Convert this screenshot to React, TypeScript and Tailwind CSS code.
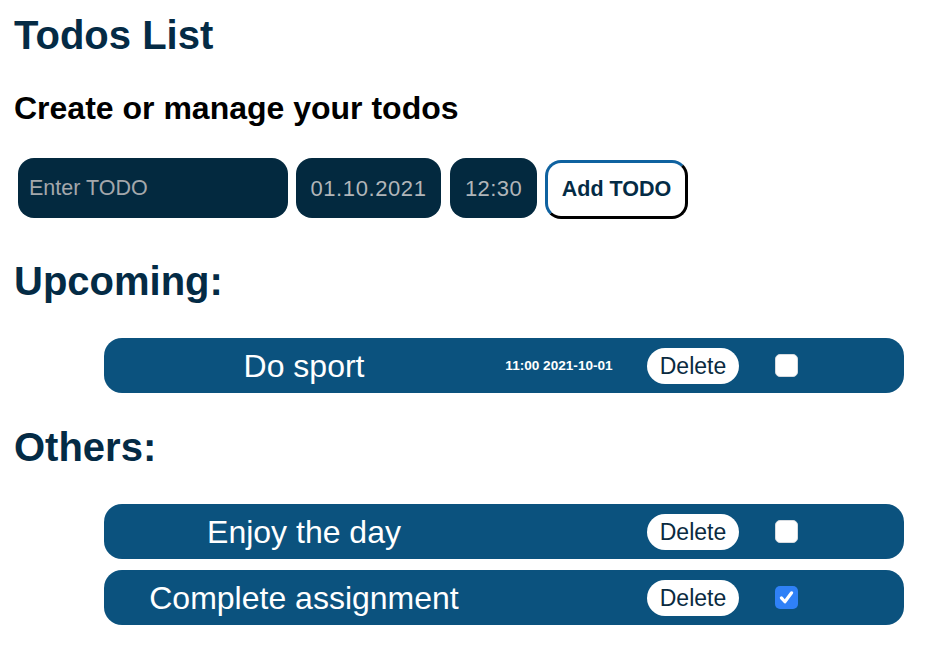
import React, { useState } from 'react';

type Todo = {
  id: number;
  title: string;
  time?: string;
  date?: string;
  done: boolean;
};

const initialUpcoming: Todo[] = [{ id: 1, title: 'Do sport', time: '11:00', date: '2021-10-01', done: false }];

const initialOthers: Todo[] = [
  { id: 2, title: 'Enjoy the day', done: false },
  { id: 3, title: 'Complete assignment', done: true },
];

const font = { fontFamily: '"Liberation Sans", Arial, Helvetica, sans-serif' };

const CheckBox: React.FC<{ checked: boolean; onChange: () => void }> = ({ checked, onChange }) => (
  <button
    type="button"
    onClick={onChange}
    className={
      checked
        ? 'w-[23px] h-[23px] rounded-[5px] bg-[#2f81f7] flex items-center justify-center'
        : 'w-[23px] h-[23px] rounded-[5px] bg-white border border-[#d6dbe0] flex items-center justify-center'
    }
  >
    {checked && (
      <svg width="17" height="17" viewBox="0 0 16 16" fill="none">
        <path d="M3.2 8.4 L6.5 12 L12.8 3.6" stroke="white" strokeWidth="3" strokeLinecap="round" strokeLinejoin="round" />
      </svg>
    )}
  </button>
);

const TodoRow: React.FC<{ todo: Todo; onToggle: () => void; onDelete: () => void }> = ({ todo, onToggle, onDelete }) => (
  <li className="flex items-center h-[55px] w-[800px] rounded-[18px] bg-[#0b527e] text-white">
    <span className="w-[400px] text-center text-[32px] leading-none">{todo.title}</span>
    <span className="w-[110px] text-center text-[13.6px] font-bold leading-none whitespace-nowrap">
      {todo.time ? `${todo.time} ${todo.date}` : ''}
    </span>
    <button
      type="button"
      onClick={onDelete}
      className="ml-[33px] w-[92px] h-[36px] pt-[2px] rounded-full bg-white text-[#0a2a40] text-[23px] leading-none"
    >
      Delete
    </button>
    <div className="ml-[36px] flex items-center">
      <CheckBox checked={todo.done} onChange={onToggle} />
    </div>
  </li>
);

export default function App() {
  const [upcoming, setUpcoming] = useState<Todo[]>(initialUpcoming);
  const [others, setOthers] = useState<Todo[]>(initialOthers);

  const toggle = (list: Todo[], set: (t: Todo[]) => void, id: number) =>
    set(list.map((t) => (t.id === id ? { ...t, done: !t.done } : t)));
  const remove = (list: Todo[], set: (t: Todo[]) => void, id: number) => set(list.filter((t) => t.id !== id));

  return (
    <div className="min-h-screen w-full bg-white" style={font}>
      <div className="pl-[14px]">
        <h1 className="pt-[15px] text-[40px] leading-none font-bold text-[#042b45]">Todos List</h1>
        <h3 className="mt-[37px] text-[32px] leading-none font-bold text-black">Create or manage your todos</h3>

        <div className="mt-[34px] h-[60px] flex items-start pl-[4px]">
          <input
            placeholder="Enter TODO"
            className="w-[270px] h-[60px] rounded-[16px] bg-[#03293f] px-[11px] text-[21.5px] text-white placeholder:text-[#a3a7ab] outline-none"
          />
          <div className="ml-[8px] w-[145px] h-[60px] rounded-[16px] bg-[#03293f] flex items-center justify-center text-[22px] text-[#b1b5b9] tracking-[0.6px]">
            01.10.2021
          </div>
          <div className="ml-[9px] w-[87px] h-[60px] rounded-[16px] bg-[#03293f] flex items-center justify-center text-[22px] text-[#b1b5b9] tracking-[0.4px]">
            12:30
          </div>
          <button
            type="button"
            className="ml-[8px] mt-[2px] w-[143px] h-[59px] rounded-[16px] bg-white border-[3px] border-t-[#0f62a0] border-l-[#0f62a0] border-b-black border-r-black text-[21.5px] font-bold text-[#042b45]"
          >
            Add TODO
          </button>
        </div>

        <h1 className="mt-[43px] text-[40px] leading-none font-bold text-[#042b45]">Upcoming:</h1>
      </div>

      <ul className="mt-[37px] ml-[104px] flex flex-col gap-[11px]">
        {upcoming.map((t) => (
          <TodoRow
            key={t.id}
            todo={t}
            onToggle={() => toggle(upcoming, setUpcoming, t.id)}
            onDelete={() => remove(upcoming, setUpcoming, t.id)}
          />
        ))}
      </ul>

      <div className="pl-[14px]">
        <h1 className="mt-[34px] text-[40px] leading-none font-bold text-[#042b45]">Others:</h1>
      </div>

      <ul className="mt-[37px] ml-[104px] flex flex-col gap-[11px]">
        {others.map((t) => (
          <TodoRow
            key={t.id}
            todo={t}
            onToggle={() => toggle(others, setOthers, t.id)}
            onDelete={() => remove(others, setOthers, t.id)}
          />
        ))}
      </ul>
    </div>
  );
}
